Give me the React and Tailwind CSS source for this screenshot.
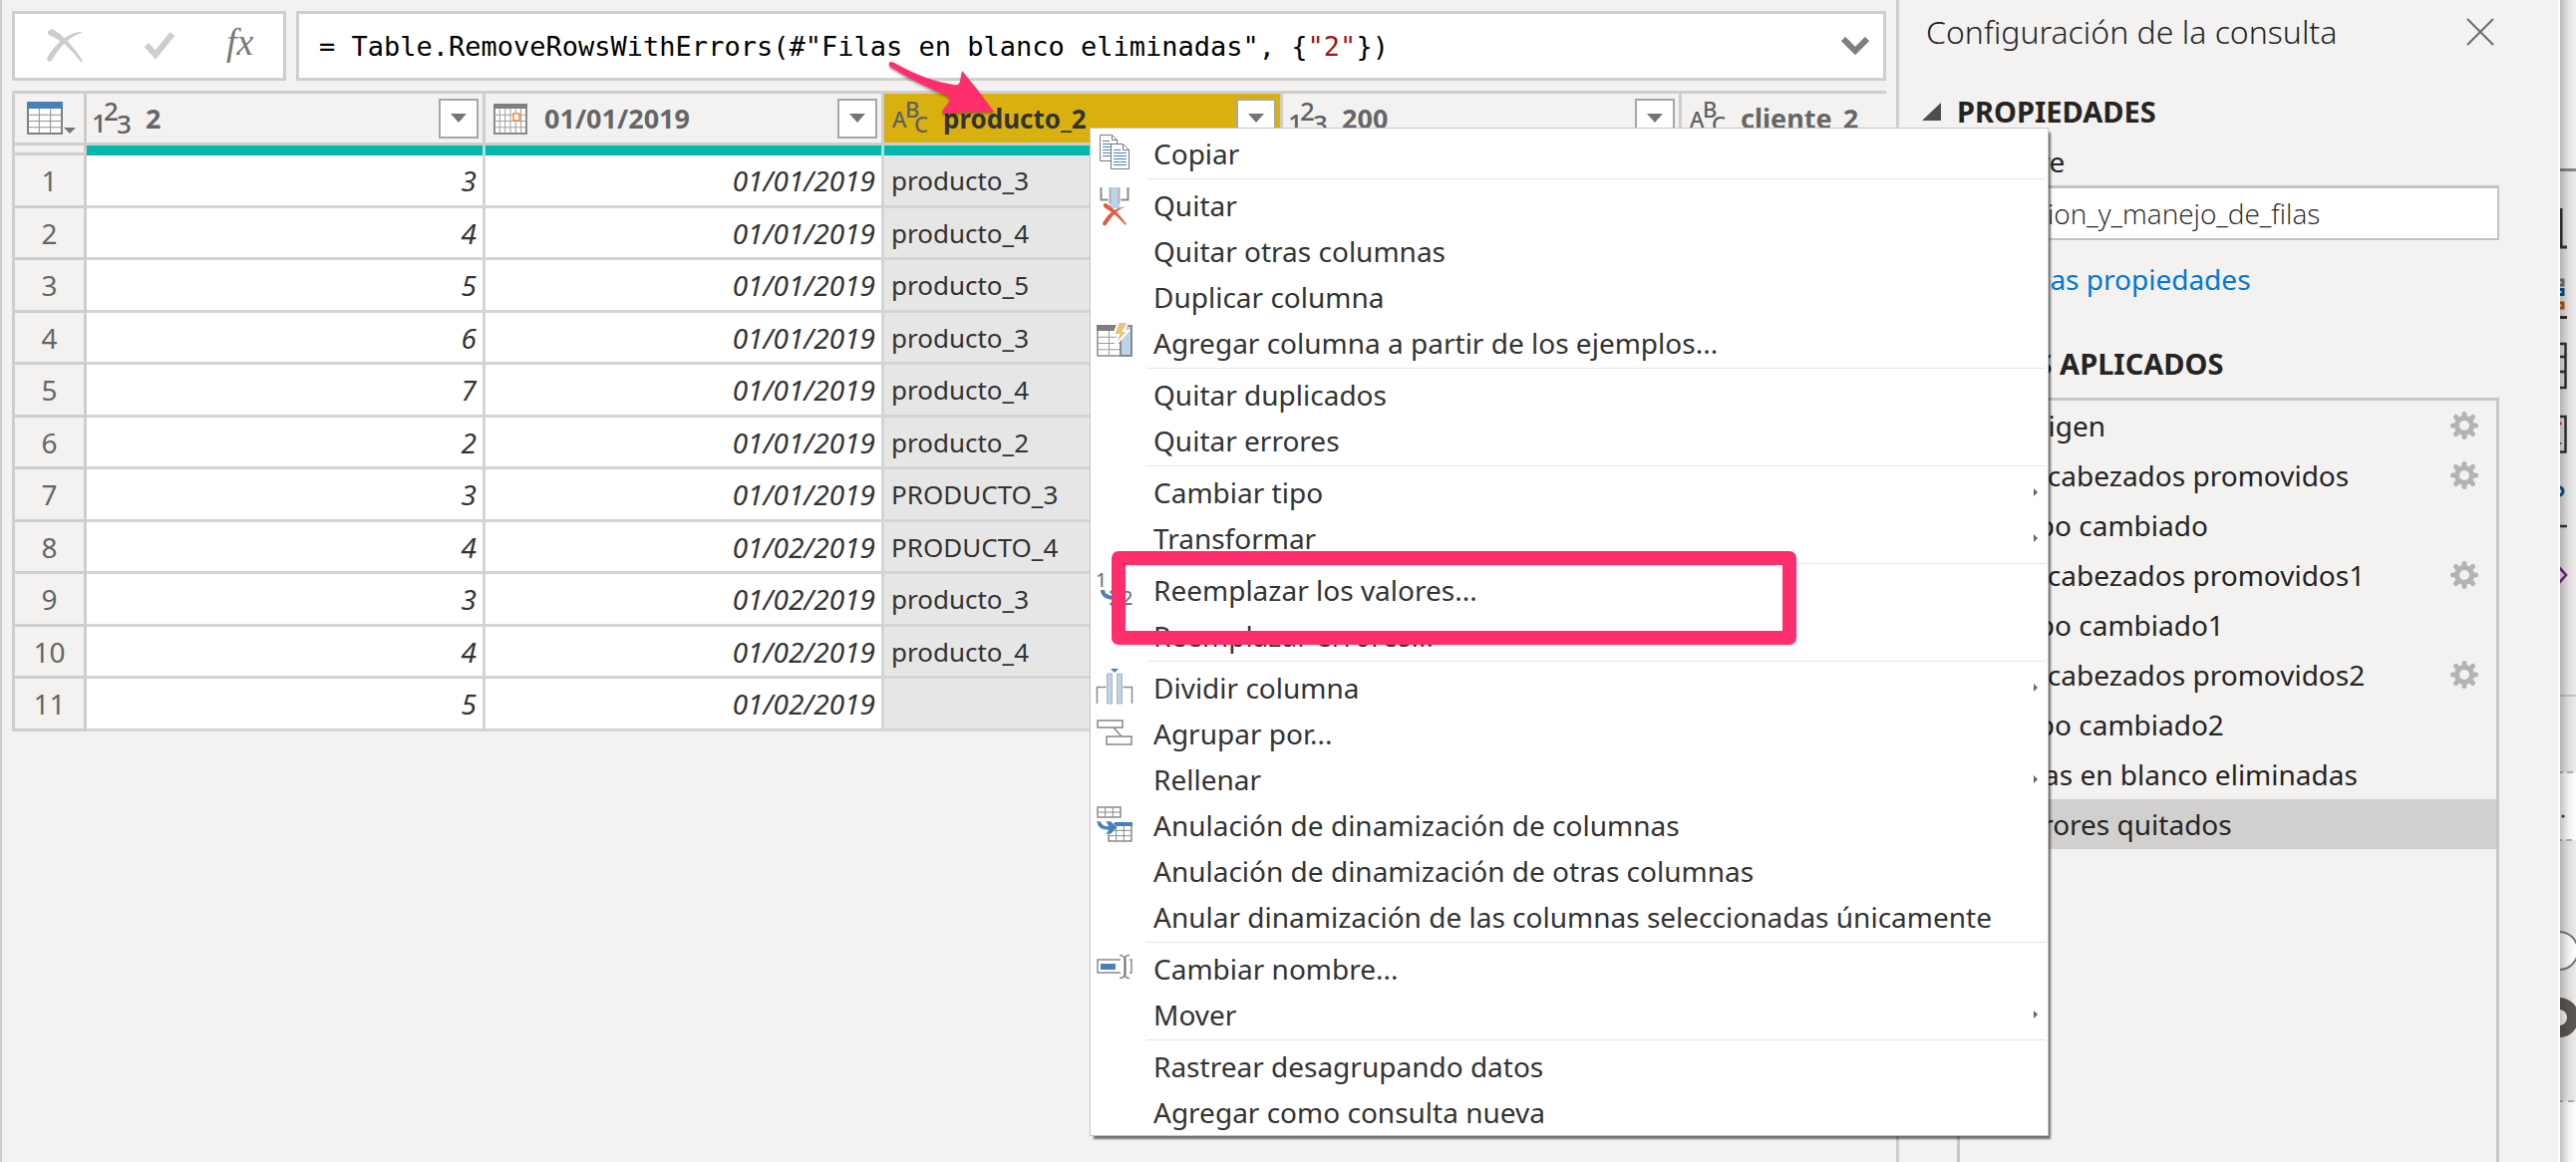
const TypeIcon = ({ glyphs, label, small }) => (
  <svg width="38" height="36" viewBox="0 0 38 36" className="shrink-0 overflow-visible fill-[#5f5f5f]" role="img" aria-label={label}>
    {glyphs.map(([char, x, y]) => (
      <text
        key={char}
        x={x}
        y={y}
        className={small ? "font-['Noto_Sans',sans-serif] text-[22px] font-medium" : "font-['Noto_Sans',sans-serif] text-[26px] font-medium"}
      >
        {char}
      </text>
    ))}
  </svg>
);

const NumberIcon = () => <TypeIcon label="Número entero" glyphs={[["1", -2, 32], ["2", 10, 20], ["3", 23, 33]]} />;
const TextIcon = () => <TypeIcon small label="Texto" glyphs={[["A", 1, 27], ["B", 14, 17], ["C", 23, 32]]} />;

const GridLines = ({ x, y, w, h, cols, rows, color }) => (
  <g stroke={color} strokeWidth="1">
    {Array.from({ length: cols - 1 }, (_, i) => (
      <path key={"c" + i} d={`M${x + ((i + 1) * w) / cols} ${y}v${h}`} />
    ))}
    {Array.from({ length: rows - 1 }, (_, i) => (
      <path key={"r" + i} d={`M${x} ${y + ((i + 1) * h) / rows}h${w}`} />
    ))}
  </g>
);

const DateIcon = () => (
  <svg width="38" height="36" viewBox="0 0 38 36" className="shrink-0" fill="none" role="img" aria-label="Fecha">
    <rect x="2" y="4" width="32" height="29" fill="#fff" stroke="#8a8a8a" strokeWidth="2" />
    <rect x="1" y="3" width="34" height="5" fill="#7f7f7f" />
    <GridLines x={2} y={8} w={32} h={25} cols={6} rows={4} color="#a0a0a0" />
    <rect x="21" y="13" width="6" height="7" fill="#fff" stroke="#ed8b3b" strokeWidth="1.500" />
  </svg>
);

const TableIcon = () => (
  <svg width="50" height="34" viewBox="0 0 50 34" fill="none" aria-hidden="true">
    <rect x="1" y="1" width="34" height="31" fill="#fff" stroke="#808080" strokeWidth="2" />
    <rect x="0" y="0" width="36" height="7" fill="#4a80ba" />
    <GridLines x={1} y={7} w={34} h={25} cols={3} rows={4} color="#8f8f8f" />
    <path d="M37 26h12l-6 6z" fill="#757575" />
  </svg>
);

const Gear = () => (
  <svg width="30" height="30" viewBox="-15 -15 30 30" fill="none" stroke="#b3b3b3" aria-hidden="true">
    <circle r="7.5" strokeWidth="5" />
    <g strokeWidth="5" strokeLinecap="round">
      <path d="M0-9v-2.500M0 9v2.500M-9 0h-2.500M9 0h2.500M6.5-6.5l2-2M-6.5 6.5l-2 2M-6.5-6.5l-2-2M6.5 6.5l2 2" />
    </g>
  </svg>
);

const menuIcons = {
  copy: (
    <g stroke="#7a7a7a" strokeWidth="1">
      <path d="M3.500-.5h12l5 5v21h-17z" fill="#fff" />
      <path d="M15.500-.5v5h5" />
      <path d="M6 5.500h7M6 8.500h10M6 11.500h8M6 14.500h8M6 17.500h8M6 20.500h8" stroke="#4a80ba" />
      <path d="M14.500 8.500h12l6 6v19h-18z" fill="#fff" />
      <path d="M26.500 8.500v6h6" />
      <path d="M17 14.500h7M17 17.500h13M17 20.500h13M17 23.500h13M17 26.500h13M17 29.500h13" stroke="#4a80ba" />
    </g>
  ),
  remove: (
    <g>
      <path d="M4.500 0v12.500h7M31.500 0v12.500h-7" stroke="#8a8a8a" />
      <rect x="13" y="0" width="10" height="21" fill="#bed2e8" />
      <path d="M13.500 0v16M22.500 0v16" stroke="#b0b0b0" />
      <path d="M7 17q1-2 4 0q9 6 19 20q-1 1-2 0q-10-11-19-16q-3-2-2-4z" fill="#d9603f" />
      <path d="M29 19q-10 4-19 18q-1 2-3 1q-2-1 0-4q8-13 22-15z" fill="#d9603f" />
    </g>
  ),
  examples: (
    <g>
      <rect x="1" y="1" width="34" height="30" fill="#fff" stroke="#8a8a8a" strokeWidth="1.500" />
      <rect x="0" y="0" width="23" height="6" fill="#7f7f7f" />
      <GridLines x={1} y={6} w={23} h={25} cols={2} rows={4} color="#9a9a9a" />
      <rect x="24" y="1" width="11" height="30" fill="#bed2e8" stroke="#8a8a8a" />
      <path d="M22-3h10l-5 9h5L18 21l4-11h-5z" fill="#ebc27c" stroke="#fff" />
    </g>
  ),
  replace: (
    <g>
      <text x="-1" y="15" className="fill-[#6a6a6a] font-['Noto_Sans',sans-serif] text-[20px]">1</text>
      <text x="25" y="33" className="fill-[#6a6a6a] font-['Noto_Sans',sans-serif] text-[20px]">2</text>
      <path d="M6 18q0 8 14 8" stroke="#4a80ba" strokeWidth="4" />
      <path d="M14 19l7 7-7 7" stroke="#4a80ba" strokeWidth="3" />
    </g>
  ),
  split: (
    <g>
      <path d="M.5 34V17.500h9M35.500 34V17.500h-9" stroke="#8a8a8a" strokeWidth="1.500" />
      <path d="M10.500 34V4h5v30zM20.500 34V4h5v30z" fill="#bed2e8" stroke="#b3b3b3" strokeWidth="1" />
      <path d="M14-1h8l-4 4z" fill="#4a80ba" />
    </g>
  ),
  group: (
    <g stroke="#858585" strokeWidth="1.500">
      <rect x="1" y="5" width="25" height="7" fill="#fff" />
      <rect x="10" y="21" width="25" height="8" fill="#fff" />
      <path d="M17 12l8 9" />
    </g>
  ),
  unpivot: (
    <g>
      <rect x="1" y="0" width="23" height="10" fill="#fff" stroke="#8a8a8a" strokeWidth="1.500" />
      <GridLines x={1} y={0} w={23} h={10} cols={3} rows={2} color="#8a8a8a" />
      <rect x="12" y="17" width="23" height="17" fill="#fff" stroke="#8a8a8a" strokeWidth="1.500" />
      <GridLines x={12} y={18} w={23} h={16} cols={3} rows={3} color="#8a8a8a" />
      <rect x="18" y="15" width="18" height="4" fill="#4a80ba" />
      <path d="M0 14h4q1 5 8 5l-3-5h5l7 6-7 7H9l3-4Q1 23 0 14z" fill="#4a80ba" stroke="#fff" strokeWidth=".5" />
    </g>
  ),
  rename: (
    <g>
      <rect x="1" y="9" width="34" height="13" fill="#fff" stroke="#8a8a8a" strokeWidth="1.500" />
      <rect x="4" y="13" width="15" height="6" fill="#4a80ba" />
      <path d="M24 6h9v20h-9z" fill="#fff" />
      <path d="M28.500 7v18" stroke="#666" strokeWidth="2" />
      <path d="M23 4.500q4 0 5 3q1-3 5-3M23 27.500q4 0 5-3q1 3 5 3" stroke="#8a8a8a" strokeWidth="1.500" />
    </g>
  ),
};

const menuGroups = [
  [{ label: "Copiar", icon: "copy" }],
  [
    { label: "Quitar", icon: "remove" },
    { label: "Quitar otras columnas" },
    { label: "Duplicar columna" },
    { label: "Agregar columna a partir de los ejemplos...", icon: "examples" },
  ],
  [{ label: "Quitar duplicados" }, { label: "Quitar errores" }],
  [{ label: "Cambiar tipo", sub: true }, { label: "Transformar", sub: true }],
  [{ label: "Reemplazar los valores...", icon: "replace" }, { label: "Reemplazar errores..." }],
  [
    { label: "Dividir columna", icon: "split", sub: true },
    { label: "Agrupar por...", icon: "group" },
    { label: "Rellenar", sub: true },
    { label: "Anulación de dinamización de columnas", icon: "unpivot" },
    { label: "Anulación de dinamización de otras columnas" },
    { label: "Anular dinamización de las columnas seleccionadas únicamente" },
  ],
  [{ label: "Cambiar nombre...", icon: "rename" }, { label: "Mover", sub: true }],
  [{ label: "Rastrear desagrupando datos" }, { label: "Agregar como consulta nueva" }],
];

const columns = [
  { name: "2", Icon: NumberIcon },
  { name: "01/01/2019", Icon: DateIcon },
  { name: "producto_2", Icon: TextIcon, selected: true },
  { name: "200", Icon: NumberIcon },
  { name: "cliente_2", Icon: TextIcon },
];

const rows = [
  ["3", "01/01/2019", "producto_3"],
  ["4", "01/01/2019", "producto_4"],
  ["5", "01/01/2019", "producto_5"],
  ["6", "01/01/2019", "producto_3"],
  ["7", "01/01/2019", "producto_4"],
  ["2", "01/01/2019", "producto_2"],
  ["3", "01/01/2019", "PRODUCTO_3"],
  ["4", "01/02/2019", "PRODUCTO_4"],
  ["3", "01/02/2019", "producto_3"],
  ["4", "01/02/2019", "producto_4"],
  ["5", "01/02/2019", ""],
];

const steps = [
  { name: "Origen", gear: true },
  { name: "Encabezados promovidos", gear: true },
  { name: "Tipo cambiado" },
  { name: "Encabezados promovidos1", gear: true },
  { name: "Tipo cambiado1" },
  { name: "Encabezados promovidos2", gear: true },
  { name: "Tipo cambiado2" },
  { name: "Filas en blanco eliminadas" },
  { name: "Errores quitados", selected: true },
];

function FormulaBar() {
  return (
    <div className="flex h-[70px] gap-[10px] pr-[10px] pl-[10px]">
      <div className="flex w-[275px] shrink-0 items-center border-3 border-[#cfcecd] bg-white pl-8">
        <button aria-label="Cancelar" className="w-[98px]">
          <svg width="36" height="34" viewBox="0 0 36 34" fill="#cdcdcd">
            <path d="M1 3q2-4 6-2q15 9 29 31q-1 2-3 0Q20 14 4 7Q1 6 1 3z" />
            <path d="M35 4Q18 9 6 30q-2 4-5 2q-2-2 1-6Q16 5 33 3q3-1 2 1z" />
          </svg>
        </button>
        <button aria-label="Aceptar" className="w-[82px]">
          <svg width="32" height="30" viewBox="0 0 32 30" fill="none" stroke="#cdcdcd" strokeWidth="6">
            <path d="M2 14l9 10L28 3" />
          </svg>
        </button>
        <button className="-mt-2 font-['Liberation_Serif',serif] text-[38px] leading-none text-[#7a7a7a] italic">fx</button>
      </div>
      <div className="flex min-w-0 flex-1 items-center border-3 border-[#cfcecd] bg-white">
        <div
          role="textbox"
          aria-label="Fórmula"
          contentEditable
          suppressContentEditableWarning
          className="flex-1 overflow-hidden pt-[2px] pl-5 font-['DejaVu_Sans_Mono',monospace] text-[27px] whitespace-pre text-black"
        >
          = Table.RemoveRowsWithErrors(#"Filas en blanco eliminadas", {"{"}<span className="text-[#a31515]">"2"</span>{"}"})
        </div>
        <button aria-label="Expandir" className="pr-[14px]">
          <svg width="28" height="18" viewBox="0 0 28 18" fill="none" stroke="#7f7f7f" strokeWidth="6">
            <path d="M2 2l12 12L26 2" />
          </svg>
        </button>
      </div>
    </div>
  );
}

function DataGrid() {
  return (
    <div className="mt-[10px] mr-[10px] ml-[10px] overflow-hidden border-t-3 border-l-3 border-[#cfcecd]">
      <table className="w-[2072px] table-fixed border-separate border-spacing-0 text-[27px] leading-none">
        <colgroup>
          <col className="w-[72px]" />
          {columns.map((c) => (
            <col key={c.name} className="w-[400px]" />
          ))}
        </colgroup>
        <thead>
          <tr>
            <th className="h-[52px] border-r-3 border-b-3 border-[#cfcecd] p-0">
              <button aria-label="Opciones de tabla" className="flex pl-3">
                <TableIcon />
              </button>
            </th>
            {columns.map(({ name, Icon, selected }) => (
              <th
                key={name}
                scope="col"
                className={`h-[52px] border-r-3 border-b-3 border-[#cfcecd] p-0 text-left font-bold ${selected ? "bg-[#d8b10f] text-[#333333]" : "text-[#666666]"}`}
              >
                <div className="flex h-[49px] items-center pr-1 pl-[7px]">
                  <Icon />
                  <span className={selected ? "flex-1 pl-[14px] text-[26px]" : "flex-1 pl-[14px]"}>{name}</span>
                  <button aria-label={`Filtrar ${name}`} className="flex size-10 items-center justify-center border-2 border-[#a6a6a6] bg-white">
                    <svg width="16" height="9" viewBox="0 0 16 9" fill="#757575">
                      <path d="M0 0h16L8 9z" />
                    </svg>
                  </button>
                </div>
              </th>
            ))}
          </tr>
        </thead>
        <tbody>
          <tr>
            <td className="h-[10px] border-r-3 border-b-3 border-[#cfcecd] p-0" />
            {columns.map((c) => (
              <td key={c.name} className="h-[10px] border-r-3 border-[#b9dcd8] bg-[#01b8aa] p-0" />
            ))}
          </tr>
        </tbody>
        <tbody>
          {rows.map(([n, date, product], i) => (
            <tr key={i} className="text-[#333333] odd:h-[53px] even:h-[52px]">
              <th scope="row" className="border-r-3 border-b-3 border-[#cfcecd] p-0 text-[28px] font-normal text-[#666666]">
                {i + 1}
              </th>
              <td className="border-r-3 border-b-3 border-[#d4d4d4] bg-white p-0 pr-[6px] text-right text-[28px] italic">{n}</td>
              <td className="border-r-3 border-b-3 border-[#d4d4d4] bg-white p-0 pr-[6px] text-right text-[28px] italic">{date}</td>
              <td className="border-r-3 border-b-3 border-[#d4d4d4] bg-[#e6e6e6] p-0 pl-[7px] text-[26px]">{product}</td>
              <td className="border-r-3 border-b-3 border-[#d4d4d4] bg-white p-0" />
              <td className="border-r-3 border-b-3 border-[#d4d4d4] bg-white p-0" />
            </tr>
          ))}
        </tbody>
      </table>
    </div>
  );
}

function QuerySettings() {
  return (
    <aside className="flex w-[666px] shrink-0 flex-col border-r-2 border-l-3 border-r-white border-l-[#cfcecd] pr-[59px] pl-[27px] text-[28px] text-[#252423]">
      <div className="flex h-16 items-center justify-between pr-1">
        <h2 className="text-[32px] leading-10 font-light">Configuración de la consulta</h2>
        <button aria-label="Cerrar">
          <svg width="30" height="28" viewBox="0 0 30 28" fill="none" stroke="#6b6b6b" strokeWidth="2">
            <path d="M2 1l26 26M28 1L2 27" />
          </svg>
        </button>
      </div>
      <button className="-ml-1 mt-7 flex h-10 items-center gap-4 text-[29px] font-bold">
        <svg width="19" height="18" viewBox="0 0 19 18" fill="#4d4d4d">
          <path d="M19 0v18H0z" />
        </svg>
        PROPIEDADES
      </button>
      <div className="flex min-h-0 flex-1 flex-col pl-[31px]">
        <label htmlFor="query-name" className="mt-[10px] h-10 leading-10">
          Nombre
        </label>
        <input
          id="query-name"
          defaultValue="Seleccion_y_manejo_de_filas"
          className="mt-1 h-[55px] border-x-2 border-t-3 border-b-2 border-[#c4c4c3] bg-white pl-[10px] font-['Open_Sans',sans-serif] font-light"
        />
        <a href="#propiedades" className="mt-[19px] h-10 pl-[2px] leading-10 text-[#0078d7]">
          Todas las propiedades
        </a>
        <h3 className="mt-[45px] h-10 pl-1 text-[29px] leading-10 font-bold">PASOS APLICADOS</h3>
        <ul className="mt-[14px] flex-1 border-3 border-b-0 border-[#c8c6c4]">
          {steps.map(({ name, gear, selected }) => (
            <li key={name} className={`flex h-[50px] items-center justify-between pr-[17px] pl-[55px] ${selected ? "bg-[#d2d0ce]" : ""}`}>
              <button>{name}</button>
              {gear && (
                <button aria-label={`Editar ${name}`}>
                  <Gear />
                </button>
              )}
            </li>
          ))}
        </ul>
      </div>
    </aside>
  );
}

function BackgroundWindow() {
  return (
    <div className="w-4 shrink-0 overflow-hidden bg-[#edebe9]" aria-hidden="true">
      <svg width="16" height="1166" viewBox="0 0 16 1166" fill="none">
        <defs>
          <linearGradient id="edge">
            <stop offset="0" stopOpacity=".24" />
            <stop offset=".5" stopOpacity=".07" />
            <stop offset="1" stopOpacity="0" />
          </linearGradient>
        </defs>
        <rect width="16" height="170" fill="#f3f2f1" />
        <rect y="775" width="16" height="68" fill="#fff" />
        <rect y="1105" width="16" height="61" fill="#fff" />
        <path d="M0 170.500h16" stroke="#8a8886" strokeWidth="3" />
        <path d="M1 209v38M0 248h7M0 318.500h7" stroke="#333" strokeWidth="3" />
        <path d="M0 281h3v5H0" stroke="#767676" strokeWidth="3" />
        <path d="M0 290.500h3v5H0" stroke="#005a9e" strokeWidth="3" />
        <path d="M0 304h3v5H0" stroke="#ca5010" strokeWidth="3" />
        <path d="M0 345h5.500v44H0M0 358h5M0 373h5M0 418h5.500v35.500H0" stroke="#333" strokeWidth="2.500" />
        <path d="M0 425h1.500" stroke="#e03030" strokeWidth="3" />
        <path d="M0 445h1.500" stroke="#666" strokeWidth="2" />
        <circle cx="-1" cy="493" r="4" stroke="#005a9e" strokeWidth="3" />
        <path d="M0 528h7" stroke="#333" strokeWidth="2.500" />
        <path d="M-2 568l8 9-8 9" stroke="#881798" strokeWidth="2.500" />
        <path d="M0 698h16" stroke="#c8c6c4" strokeWidth="2" />
        <path d="M0 775h3M7 775h6M0 843h2M6 843h6M0 1105h3M8 1105h6" stroke="#b3b0ad" strokeWidth="2" />
        <circle cx="3" cy="819" r="1.500" fill="#333" />
        <circle cx="-1" cy="954" r="19" fill="#fff" stroke="#7a7876" strokeWidth="2" />
        <circle cx="-1" cy="1021" r="14" stroke="#5b5855" strokeWidth="12" fill="#fff" />
        <rect width="16" height="1166" fill="url(#edge)" />
      </svg>
    </div>
  );
}

function ContextMenu() {
  return (
    <div className="absolute top-[128px] left-[1093px] w-[962px] border border-[#c6c6c6] bg-white pt-[2px] text-[28px] text-[#333333] shadow-[3px_4px_2px_-1px_rgba(0,0,0,0.55)]">
      <ul role="menu">
        {menuGroups.map((group, g) => (
          <li key={g} role="none">
            {g > 0 && <div role="separator" className="mt-[2px] mr-[2px] mb-[3px] ml-14 border-t border-[#e5e5e5]" />}
            {group.map(({ label, icon, sub }) => (
              <button key={label} role="menuitem" className="flex h-[46px] w-full items-center pr-[10px] pl-[6px] text-left">
                <svg width="36" height="36" viewBox="0 0 36 36" fill="none" strokeWidth="2" className="shrink-0 overflow-visible" aria-hidden="true">
                  {icon && menuIcons[icon]}
                </svg>
                <span className="flex-1 pl-[21px] whitespace-nowrap">{label}</span>
                {sub && (
                  <svg width="4" height="8" viewBox="0 0 4 8" fill="#666">
                    <path d="M0 0l4 4-4 4z" />
                  </svg>
                )}
              </button>
            ))}
          </li>
        ))}
      </ul>
      <div className="pointer-events-none absolute top-[424px] left-[21px] h-[94px] w-[687px] rounded-[7px] border-[14px] border-[#ff2e6c]" />
    </div>
  );
}

export default function App() {
  return (
    <div className="relative flex min-h-screen overflow-hidden bg-[#f3f2f1] font-['Noto_Sans',sans-serif]">
      <main className="min-w-0 flex-1 border-l-2 border-[#cfcecd] pt-[11px]">
        <FormulaBar />
        <DataGrid />
      </main>
      <QuerySettings />
      <BackgroundWindow />
      <svg
        width="112"
        height="56"
        viewBox="0 0 112 56"
        aria-hidden="true"
        className="pointer-events-none absolute top-[61px] left-[890px] drop-shadow-[0_2px_1px_rgba(0,0,0,0.35)]"
      >
        <path d="M2 2q1-2 5 0q32 18 60 22q5 1 6-3l2-11q17 20 32 41q-25 0-50 2q-3 0-1-4l6-8q2-3-2-6Q28 22 3 6q-2-2-1-4z" fill="#ff2e6c" />
      </svg>
      <ContextMenu />
    </div>
  );
}
